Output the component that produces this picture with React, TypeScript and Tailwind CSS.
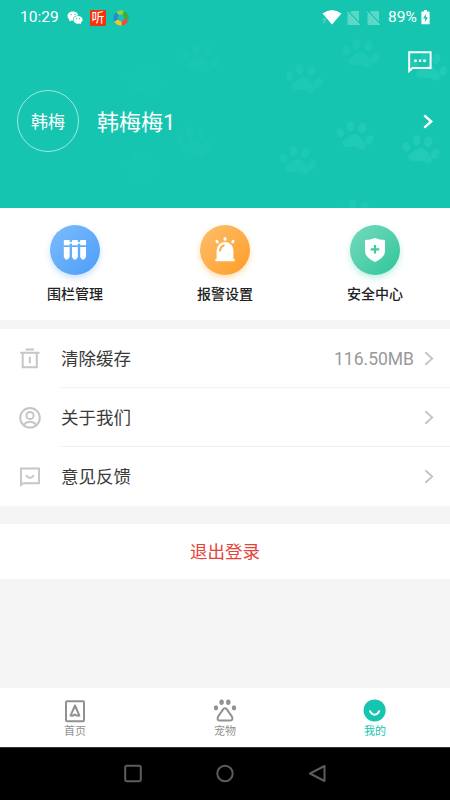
import type { ReactNode } from "react"

// Faint paw prints scattered over the header
const PAWS = [
  { x: 200, y: 60, opacity: 0.035 },
  { x: 361, y: 55, opacity: 0.08 },
  { x: 304, y: 80, opacity: 0.07 },
  { x: 429, y: 68, opacity: 0.1 },
  { x: 355, y: 137, opacity: 0.09 },
  { x: 421, y: 151, opacity: 0.11 },
  { x: 298, y: 162, opacity: 0.07 },
  { x: 194, y: 143, opacity: 0.035 },
  { x: 145, y: 83, opacity: 0.015 },
  { x: 140, y: 168, opacity: 0.015 },
  { x: 357, y: 216, opacity: 0.08 },
]

const ACTIONS = [
  { label: "围栏管理", icon: <FenceIcon />, tone: "from-[#7dbcfa] to-[#4a9dfb] shadow-[0_3px_6px_rgba(74,157,251,0.3)]" },
  { label: "报警设置", icon: <AlarmIcon />, tone: "from-[#fcbf69] to-[#fe9d1c] shadow-[0_3px_6px_rgba(254,157,28,0.3)]" },
  { label: "安全中心", icon: <ShieldIcon />, tone: "from-[#73d9be] to-[#27c69a] shadow-[0_3px_6px_rgba(39,198,154,0.3)]" },
]

const ROWS = [
  { label: "清除缓存", icon: <TrashIcon />, value: "116.50MB" },
  { label: "关于我们", icon: <UserIcon />, value: "" },
  { label: "意见反馈", icon: <FeedbackIcon />, value: "" },
]

const TABS = [
  { label: "首页", icon: <HomeIcon />, active: false },
  { label: "宠物", icon: <PetIcon />, active: false },
  { label: "我的", icon: <MineIcon />, active: true },
]

function FenceIcon() {
  return (
    <svg width="24" height="22" viewBox="0 0 24 22" fill="#fff">
      {[0.8, 9, 17.2].map((x) => (
        <g key={x} transform={`translate(${x} 0)`}>
          <path d="M0.7 1H5.8V6.2H0V1.7Q0 1 0.7 1Z" />
          <path d="M0 8H5.8V18L4 20.5H1.8L0 18Z" />
        </g>
      ))}
      <path d="M5 3.1H19V4.6H5Z" />
    </svg>
  )
}

function AlarmIcon() {
  return (
    <svg width="24" height="26" viewBox="0 0 24 26" fill="#fff">
      <path d="M3.6 22V13.5A8.4 8.4 0 0 1 20.4 13.5V22H21.6V24.3H2.4V22Z" />
      <path d="M7 13.6Q7.4 9.6 10.8 8.4" fill="none" stroke="#fda936" strokeWidth="1.8" strokeLinecap="round" />
      <ellipse cx="12" cy="1.900" rx="1.500" ry="1.900" />
      <ellipse cx="4.100" cy="4.600" rx="1.400" ry="1.900" transform="rotate(-38 4.1 4.6)" />
      <ellipse cx="19.900" cy="4.600" rx="1.400" ry="1.900" transform="rotate(38 19.9 4.6)" />
    </svg>
  )
}

function ShieldIcon() {
  return (
    <svg width="22" height="26" viewBox="0 0 22 26">
      <path d="M11 1Q15.5 3 21 3V14Q21 20.5 11 25Q1 20.5 1 14V3Q6.5 3 11 1Z" fill="#fff" />
      <path d="M11 8V16.600M6.700 12.300H15.300" stroke="#3ecaa2" strokeWidth="2.200" />
    </svg>
  )
}

function TrashIcon() {
  return (
    <svg width="22" height="22" viewBox="0 0 22 22" fill="none" stroke="#c6c6c6" strokeWidth="2">
      <path d="M6.700 1.500H15M1.200 4.800H20.500M3.700 5V19.300H17.800V5M10.800 8.700V15.200" />
    </svg>
  )
}

function UserIcon() {
  return (
    <svg width="22" height="22" viewBox="0 0 22 22" fill="none" stroke="#c6c6c6" strokeWidth="2">
      <circle cx="11" cy="10.800" r="9.800" />
      <circle cx="11" cy="8.500" r="3.600" />
      <path d="M4.500 17.800Q7.500 14.800 11 14.800Q14.500 14.800 17.500 17.800" />
    </svg>
  )
}

function FeedbackIcon() {
  return (
    <svg width="22" height="22" viewBox="0 0 22 22" fill="none" stroke="#c6c6c6" strokeWidth="1.900">
      <path d="M2 19V2.500H20V17.200H4.200Z" />
      <path d="M7.200 9Q8.300 11.800 11 11.800Q13.700 11.800 14.800 9" />
    </svg>
  )
}

function HomeIcon() {
  return (
    <svg width="24" height="24" viewBox="0 0 24 24" fill="none" stroke="#919191" strokeWidth="2">
      <rect x="3" y="2.200" width="18" height="20" rx="1" />
      <path d="M12 6.500L16.400 16.600Q14 17.100 12 15.400Q10 17.100 7.600 16.600Z" strokeLinejoin="round" />
    </svg>
  )
}

function PetIcon() {
  return (
    <svg width="24" height="24" viewBox="0 0 24 24" fill="#919191">
      <ellipse cx="3" cy="8.800" rx="2.200" ry="2.600" />
      <ellipse cx="8.600" cy="3.200" rx="2.200" ry="2.700" />
      <ellipse cx="15.300" cy="3.200" rx="2.200" ry="2.700" />
      <ellipse cx="21" cy="8.800" rx="2.200" ry="2.600" />
      <path
        d="M10.300 10.200Q12 8.300 13.700 10.200L19 17.800Q20.300 21.300 17.500 21.600H6.500Q3.700 21.300 5 17.800Z"
        fill="none"
        stroke="#919191"
        strokeWidth="2"
      />
    </svg>
  )
}

function MineIcon() {
  return (
    <svg width="24" height="24" viewBox="0 0 24 24">
      <circle cx="11.600" cy="11.400" r="11" fill="#15c5b0" />
      <path d="M7 12.200Q8.500 15.700 11.600 15.700Q14.700 15.700 16.200 12.200" fill="none" stroke="#fff" strokeWidth="2" strokeLinecap="round" />
    </svg>
  )
}

function Chevron({ className }: { className: string }) {
  return (
    <svg width="10" height="15" viewBox="0 0 10 15" fill="none" stroke="currentColor" className={className}>
      <path d="M1.300 1.300L8.200 7.500L1.300 13.700" />
    </svg>
  )
}

function PawPattern() {
  return (
    <svg className="absolute inset-0" width="450" height="208" viewBox="0 0 450 208">
      {PAWS.map(({ x, y, opacity }) => (
        <g key={`${x}-${y}`} transform={`translate(${x} ${y}) rotate(8)`} fill="#8dffe0" opacity={opacity}>
          <path d="M-1 -3C4 -4 7 1 11 5C14 9 10 13 6 11C2 9 -2 10 -6 11C-11 12 -14 7 -10 4C-6 1 -5 -2 -1 -3Z" />
          <ellipse cx="-15" cy="-2" rx="3.500" ry="4.800" transform="rotate(-25 -15 -2)" />
          <ellipse cx="-6" cy="-10" rx="3.800" ry="5.500" transform="rotate(-8 -6 -10)" />
          <ellipse cx="6" cy="-10" rx="4" ry="5.500" transform="rotate(10 6 -10)" />
          <ellipse cx="14.500" cy="1" rx="3.800" ry="5.200" transform="rotate(20 14.5 1)" />
        </g>
      ))}
    </svg>
  )
}

function NoSim() {
  return (
    <svg width="13" height="14" viewBox="0 0 13 14">
      <path d="M4.500 0H12V14H0.500V4Z" fill="#5bd7c7" />
      <path d="M0.800 0.200L13 12.800" stroke="#15c5b0" strokeWidth="1.400" />
      <path d="M0 0.900L12.600 13.900" stroke="#68dccb" strokeWidth="1.100" />
    </svg>
  )
}

function StatusBar() {
  return (
    <div className="relative flex h-[35px] items-center pl-[20px] pr-[20px] text-white">
      <span className="w-[47px] pt-px text-[15.500px] leading-none">10:29</span>
      <svg width="16" height="14" viewBox="0 0 16 14" fill="#fff">
        <path d="M6 0.500C2.800 0.500 0.500 2.600 0.500 5.100C0.500 6.600 1.300 7.800 2.500 8.700L2 10.500L4.100 9.400Q5 9.700 6 9.600C5.400 6.500 8 4.200 11.300 4.400C10.700 2 8.600 0.500 6 0.500Z" />
        <path d="M11 5C8.300 5 6.500 6.700 6.500 8.900C6.500 11.700 9.600 13.300 12.500 12.400L14.200 13.300L13.800 11.700C15 10.900 15.600 9.900 15.600 8.800C15.600 6.700 13.500 5 11 5Z" />
        <g fill="#15c5b0">
          <circle cx="4.200" cy="3.600" r="0.700" />
          <circle cx="7.900" cy="3.600" r="0.700" />
          <circle cx="9.600" cy="7.700" r="0.600" />
          <circle cx="12.600" cy="7.700" r="0.600" />
        </g>
      </svg>
      <span className="ml-[7px] flex size-4 items-center justify-center rounded-[1px] bg-[#f5330c] text-[13px] leading-none">听</span>
      <svg width="16" height="16" viewBox="0 0 16 16" className="ml-[7px]" fill="none" strokeWidth="4.200">
        <path d="M3.200 10.500A5.500 5.500 0 0 1 5 3.400" stroke="#2689d8" />
        <path d="M4.500 3.700A5.500 5.500 0 0 1 10.500 3.100" stroke="#8bd545" />
        <path d="M10.200 2.900A5.500 5.500 0 0 1 13.300 9.500" stroke="#43a83e" />
        <path d="M13.200 9.500A5.500 5.500 0 0 1 8.600 13.300" stroke="#eb4d42" />
        <path d="M8.600 13.300A5.500 5.500 0 0 1 3.200 10.400" stroke="#f5c52c" />
        <path d="M7 5.500L11 9L8 11L5.500 8Z" fill="#15c5b0" />
      </svg>
      <div className="ml-auto flex items-center">
        <svg width="20" height="15" viewBox="0 0 20 15">
          <path d="M0.500 3.500Q10 -3.500 19.500 3.500L10 14.500Z" fill="#fff" />
          <path d="M0.500 10L3 8.500V11.500L1 13" stroke="#68dccb" fill="none" />
        </svg>
        <span className="ml-[5px] mr-[8px] flex gap-[7px]">
          <NoSim />
          <NoSim />
        </span>
        <span className="w-[33px] pt-px text-[15.500px] leading-none">89%</span>
        <svg width="9" height="15" viewBox="0 0 9 15">
          <path d="M3 0H6V1.500H8Q8.600 1.500 8.600 2.100V14.200H0.400V2.100Q0.400 1.500 1 1.500H3Z" fill="#fff" />
          <path d="M5.300 3.500L2 8.500H4.200L3.700 12.300L7 7.200H4.800Z" fill="#15c5b0" />
        </svg>
      </div>
    </div>
  )
}

function Header() {
  return (
    <header className="relative h-[208px] shrink-0 overflow-hidden bg-[#15c5b0]">
      <PawPattern />
      <StatusBar />
      <div className="relative flex justify-end pt-[15px] pr-[18px] text-white">
        <svg width="24" height="24" viewBox="0 0 24 24" fill="none" stroke="currentColor" strokeWidth="2">
          <path d="M1.200 21V2.200H22.600V18H4.500Z" />
          <path d="M6.300 10.700H8.700M10.800 10.700H13.200M15.300 10.700H17.700" strokeWidth="2.400" />
        </svg>
      </div>
      <div className="relative mt-4 flex items-center pl-[17px] pr-[17px] text-white">
        <div className="flex size-[62px] items-center justify-center rounded-full border border-[#9feade] pt-[3px] text-[17px]">
          韩梅
        </div>
        <span className="ml-[18px] pt-[3px] text-[22px] leading-none">韩梅梅1</span>
        <Chevron className="ml-auto stroke-[2.400]" />
      </div>
    </header>
  )
}

function Section({ children, className }: { children: ReactNode; className: string }) {
  return <section className={`shrink-0 bg-white ${className}`}>{children}</section>
}

export default function App() {
  return (
    <div className="flex h-[800px] w-[450px] flex-col overflow-hidden bg-[#f5f5f5] font-[Roboto,'Noto_Sans_CJK_SC',sans-serif]">
      <Header />

      <Section className="grid h-[112px] grid-cols-3 pt-[17px]">
        {ACTIONS.map(({ label, icon, tone }) => (
          <div key={label} className="flex flex-col items-center">
            <div className={`mr-px flex size-[50px] items-center justify-center rounded-full bg-linear-to-br ${tone}`}>{icon}</div>
            <span className="mt-[9px] text-sm font-medium text-[#222]">{label}</span>
          </div>
        ))}
      </Section>

      <Section className="mt-[9px] h-[177px]">
        {ROWS.map(({ label, icon, value }, i) => (
          <div key={label} className="flex h-[59px] items-center pl-[19px]">
            {icon}
            <div className={`ml-5 flex h-full flex-1 items-center pr-4 ${i < 2 ? "border-b border-[#f0f0f0]" : ""}`}>
              <span className="pt-[2px] text-[17.500px] text-[#3a3a3a]">{label}</span>
              <span className="ml-auto pt-[2px] text-[17.500px] text-[#999]">{value}</span>
              <Chevron className="ml-[10px] stroke-[1.900] text-[#c4c4c4]" />
            </div>
          </div>
        ))}
      </Section>

      <Section className="mt-[18px] flex h-[55px] items-center justify-center pt-[2px] text-[17.500px] text-[#e6433b]">
        退出登录
      </Section>

      <nav className="mt-auto grid h-[59px] shrink-0 grid-cols-3 bg-white pt-[11px]">
        {TABS.map(({ label, icon, active }) => (
          <div key={label} className="flex flex-col items-center">
            {icon}
            <span className={`mt-[1px] text-[11px] leading-4 ${active ? "text-[#15c5b0]" : "text-[#919191]"}`}>{label}</span>
          </div>
        ))}
      </nav>

      {/* Android navigation bar */}
      <div className="flex h-[53px] shrink-0 items-center justify-center gap-[72px] border-t border-[#333] bg-black">
        <svg width="20" height="20" viewBox="0 0 20 20" fill="none" stroke="#5c5c5c" strokeWidth="2">
          <rect x="2.200" y="1.700" width="15.600" height="15.600" rx="1.800" />
        </svg>
        <svg width="20" height="20" viewBox="0 0 20 20" fill="none" stroke="#5c5c5c" strokeWidth="2">
          <circle cx="10" cy="9.500" r="7.700" />
        </svg>
        <svg width="20" height="20" viewBox="0 0 20 20" fill="none" stroke="#5c5c5c" strokeWidth="2">
          <path d="M17.500 2V17L3 9.500Z" strokeLinejoin="round" />
        </svg>
      </div>
    </div>
  )
}
